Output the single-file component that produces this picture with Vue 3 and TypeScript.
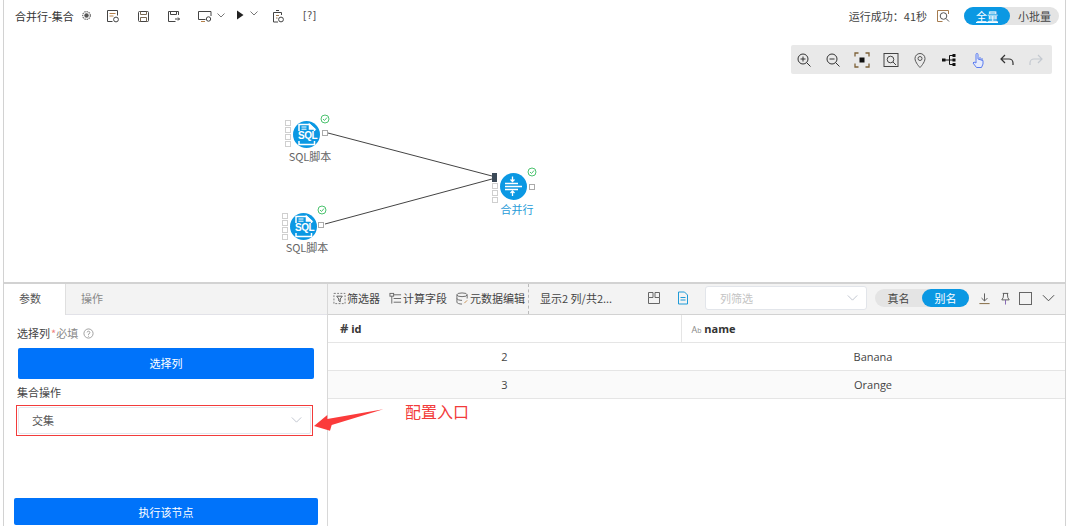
<script setup lang="ts">
interface Row { id: number; name: string }
const rows: Row[] = [
  { id: 2, name: 'Banana' },
  { id: 3, name: 'Orange' },
]
interface CanvasNode { key: string; x: number; y: number; label: string }
const nodes: CanvasNode[] = [
  { key: 'a', x: 280, y: 113, label: 'SQL脚本' },
  { key: 'b', x: 277, y: 206, label: 'SQL脚本' },
]
</script>

<template>
  <div class="page">
    <section class="designer">
      <header class="topbar">
        <span class="title">合并行-集合</span>
        <svg class="ic tb-first" viewBox="0 0 12 12"><circle cx="6" cy="6" r="2.4" fill="#555"/><circle cx="6" cy="6" r="4.2" fill="none" stroke="#777" stroke-width="1.4" stroke-dasharray="1.6 .8"/></svg>
        <svg class="ic tb-doc" viewBox="0 0 14 14" fill="none" stroke="#444"><path d="M1.500 1.500h10v5M1.500 1.500v11h5"/><path d="M3.500 4.500h6M3.500 7h4" stroke="#b5814a"/><circle cx="10" cy="10.500" r="2.400"/></svg>
        <svg class="ic tb" viewBox="0 0 14 14" fill="none" stroke="#444"><rect x="2.500" y="2.500" width="10" height="10" rx="1"/><path d="M4.500 2.500v3h6v-3M4.500 12.500v-4h6v4" stroke="#7b6a55"/></svg>
        <svg class="ic tb" viewBox="0 0 14 14" fill="none" stroke="#444"><path d="M12.500 6V2.500h-10v10h7"/><path d="M4.500 2.500v3h6v-3"/><path d="M9 10h4.500M12 8.500l1.500 1.500-1.500 1.500"/></svg>
        <span class="drop tb-wide">
          <svg class="ic" viewBox="0 0 14 14" fill="none" stroke="#444"><path d="M13 7V2.500H.5v8h7"/><path d="M3 12.500h4" stroke="#b5814a"/><circle cx="10.500" cy="10" r="2.200"/></svg>
          <svg class="chev" viewBox="0 0 8 5" fill="none" stroke="#777"><path d="M.5.500 4 4 7.500.500"/></svg>
        </span>
        <span class="drop play">
          <svg class="ic" viewBox="0 0 14 14"><path d="M4 2.500l6.500 4.500L4 11.500z" fill="#222"/></svg>
          <svg class="chev up" viewBox="0 0 8 5" fill="none" stroke="#777"><path d="M.5.500 4 4 7.500.500"/></svg>
        </span>
        <svg class="ic tb-hist" viewBox="0 0 14 14" fill="none" stroke="#444"><path d="M5 1.500h3M2.500 3.500h8v2.500M2.500 3.500v9.500h4.500"/><path d="M5 6.500h3M5 9h1.500" stroke="#a07a50"/><circle cx="10" cy="10.500" r="2.400"/></svg>
        <span class="help-code">[?]</span>
        <span class="status">运行成功：41秒</span>
        <svg class="ic log" viewBox="0 0 14 14" fill="none" stroke="#555"><path d="M12.500 5V1.500h-11v11h5" stroke="#a57b4e"/><circle cx="7.500" cy="7" r="3.300"/><path d="M10 9.500l3 3"/></svg>
        <div class="mode">
          <span class="mode-on">全量</span>
          <span class="mode-off">小批量</span>
        </div>
      </header>

      <div class="zoombar">
        <svg class="zi" viewBox="0 0 16 16" fill="none" stroke="#333"><circle cx="7" cy="7" r="5"/><path d="M10.500 10.500l4 4M4.500 7h5M7 4.500v5"/></svg>
        <svg class="zi" viewBox="0 0 16 16" fill="none" stroke="#333"><circle cx="7" cy="7" r="5"/><path d="M10.500 10.500l4 4M4.500 7h5"/></svg>
        <svg class="zi" viewBox="0 0 16 16" fill="none" stroke="#7d6238" stroke-width="1.300"><path d="M1 4.500V1h3.500M11.500 1H15v3.500M15 11.500V15h-3.500M4.500 15H1v-3.500"/><rect x="5.500" y="5.500" width="5" height="5" fill="#111" stroke="none"/></svg>
        <svg class="zi" viewBox="0 0 16 16" fill="none" stroke="#444"><rect x="1" y="1.500" width="14" height="13"/><circle cx="7.500" cy="7.500" r="3.300"/><path d="M10 10l3 3"/></svg>
        <svg class="zi" viewBox="0 0 16 16" fill="none" stroke="#555"><path d="M8 15.500S3 10.500 3 6.500a5 5 0 0110 0c0 4-5 9-5 9z"/><circle cx="8" cy="6.500" r="2"/></svg>
        <svg class="zi" viewBox="0 0 16 16" fill="none" stroke="#111"><path d="M4 8h8M8.500 3.500v9M8.500 3.500H12M8.500 12.500H12"/><g fill="#111" stroke="none"><rect x="1" y="6.500" width="3.500" height="3"/><rect x="11.500" y="2" width="3" height="3"/><rect x="11.500" y="6.500" width="3" height="3"/><rect x="11.500" y="11" width="3" height="3"/></g></svg>
        <svg class="zi" viewBox="0 0 16 16" fill="none" stroke="#5b7cf0"><path d="M6 8.500V2.500a1 1 0 012 0V7l5 1.500V12l-1.500 3.500h-5L3 11l1-1 2 1z" fill="#e6ebfb"/><path d="M10 5v2.500M12 6v2.500"/></svg>
        <svg class="zi" viewBox="0 0 16 16" fill="none" stroke="#333" stroke-width="1.200"><path d="M6 3L2 7l4 4M2 7h8a4 4 0 014 4v2"/></svg>
        <svg class="zi" viewBox="0 0 16 16" fill="none" stroke="#c4c9d0" stroke-width="1.200"><path d="M10 3l4 4-4 4M14 7H6a4 4 0 00-4 4v2"/></svg>
      </div>

      <svg class="links" width="1068" height="282" viewBox="0 0 1068 282" fill="none" stroke="#444">
        <path d="M328 133L492 176"/>
        <path d="M325 224L492 179"/>
      </svg>

      <div v-for="n in nodes" :key="n.key" class="node" :class="'n-' + n.key" :style="{ left: n.x + 'px', top: n.y + 'px' }">
        <i class="port" style="left:1px;top:7px"></i>
        <i class="port" style="left:1px;top:14px"></i>
        <i class="port" style="left:1px;top:21px"></i>
        <i class="port" style="left:1px;top:28px"></i>
        <i class="port big"></i>
        <svg class="okmark" viewBox="0 0 10 10" fill="none" stroke="#4cc36f"><circle cx="5" cy="5" r="4"/><path d="M3 5l1.500 1.500L7 3.500"/></svg>
        <span class="disc">
          <svg viewBox="0 0 27 27" width="27" height="27" fill="none" stroke="#fff" stroke-width="1.500"><path d="M6 10V3.500h10.500L21.500 8v2M6 20v3.500h15.500V20"/><path d="M16.500 3.500V8h5z" fill="#fff"/><path d="M8.500 6h5M8.500 8.200h5" stroke-width="1"/></svg>
          <b class="sql-t">SQL</b>
        </span>
        <span class="node-label">{{ n.label }}</span>
      </div>

      <div class="node merge">
        <i class="inport"></i>
        <i class="port" style="left:0;top:17px"></i>
        <i class="port" style="left:0;top:24px"></i>
        <i class="port" style="left:0;top:31px"></i>
        <i class="port big"></i>
        <svg class="okmark" viewBox="0 0 10 10" fill="none" stroke="#4cc36f"><circle cx="5" cy="5" r="4"/><path d="M3 5l1.500 1.500L7 3.500"/></svg>
        <span class="disc">
          <svg viewBox="0 0 27 27" width="27" height="27" fill="none" stroke="#fff" stroke-width="1.300"><path d="M5 10.500h13M5 13.500h17M5 16.500h13"/><path d="M12.500 3.500v4.500M10.500 6.500l2 2 2-2M12.500 23v-4.500M10.500 20l2-2 2 2"/></svg>
        </span>
        <span class="node-label active">合并行</span>
      </div>
    </section>

    <section class="bottom">
      <aside class="side">
        <div class="tabs">
          <span class="tab active">参数</span>
          <span class="tab">操作</span>
        </div>
        <div class="form">
          <div class="lbl first">
            选择列 <em class="star">*</em><span class="req">必填</span>
            <svg class="q" viewBox="0 0 12 12" fill="none" stroke="#999"><circle cx="6" cy="6" r="5"/><path d="M4.500 4.800A1.500 1.500 0 116 6.500v1M6 8.500v1"/></svg>
          </div>
          <button class="primary pick" type="button">选择列</button>
          <div class="lbl second">集合操作</div>
          <div class="select-outline">
            <div class="select">
              <span>交集</span>
              <svg class="sel-chev" viewBox="0 0 12 7" fill="none" stroke="#b8bec8"><path d="M.5.500 6 6l5.500-5.500"/></svg>
            </div>
          </div>
        </div>
        <button class="primary run" type="button">执行该节点</button>
      </aside>

      <div class="data">
        <div class="datatools">
          <span class="tool">
            <svg class="ti" viewBox="0 0 14 14" fill="none" stroke="#777"><rect x="1" y="1.500" width="12" height="11" stroke-dasharray="2 1.500"/><path d="M4 4.500h6L7.800 7.500V10.500L6.200 9.500v-2z" stroke="#555"/></svg>筛选器</span>
          <span class="tool">
            <svg class="ti" viewBox="0 0 14 14" fill="none" stroke="#666"><rect x="1" y="1.500" width="4" height="3"/><path d="M5 3h8M5 7h8M5 11h8M3 4.500v8"/></svg>计算字段</span>
          <span class="tool">
            <svg class="ti" viewBox="0 0 14 14" fill="none" stroke="#666"><ellipse cx="6.500" cy="3" rx="5.500" ry="2"/><path d="M1 3v8c0 1.100 2.500 2 5.500 2M12 3v4M1 7c0 1.100 2.500 2 5.500 2"/><path d="M9 12l3-3" stroke="#c58a4a"/></svg>元数据编辑</span>
          <span class="vdash"></span>
          <span class="shown">显示2 列/共2...</span>
          <svg class="ti2 layout" viewBox="0 0 14 14" fill="none" stroke="#666"><path d="M1.500 1.500h4.500v5h-4.500zM8 1.500h4.500v5H8zM1.500 6.500v6h11v-6"/></svg>
          <svg class="ti2 doc" viewBox="0 0 14 14" fill="none" stroke="#1f9bd8"><path d="M2.500 1h6l3 3v9h-9z"/><path d="M4.500 6.500h5M4.500 9h5"/></svg>
          <div class="colfilter">
            <span>列筛选</span>
            <svg class="sel-chev" viewBox="0 0 12 7" fill="none" stroke="#b8bec8"><path d="M.5.500 6 6l5.500-5.500"/></svg>
          </div>
          <div class="namesw">
            <span class="ns-off">真名</span>
            <span class="ns-on">别名</span>
          </div>
          <svg class="ti3 dl" viewBox="0 0 14 14" fill="none" stroke="#555"><path d="M7 1.500v8M3.800 6.500 7 9.700l3.200-3.200"/><path d="M1.500 12.500h11" stroke="#7d6238"/></svg>
          <svg class="ti3 pin" viewBox="0 0 14 14" fill="none" stroke="#555"><path d="M4 1.500h6M5 1.500 4.500 6 3 8.500h8L9.500 6 9 1.500"/><path d="M7 8.500v5" stroke="#8060b0"/></svg>
          <span class="square"></span>
          <svg class="ti3 collapse" viewBox="0 0 14 8" fill="none" stroke="#444"><path d="M1 1l6 6 6-6"/></svg>
        </div>
        <table class="grid">
          <colgroup><col class="c1" /><col /></colgroup>
          <thead>
            <tr>
              <th class="th-id"><span class="hash">#</span> id</th>
              <th class="th-name"><span class="ab">A<small>b</small></span> name</th>
            </tr>
          </thead>
          <tbody>
            <tr v-for="(r, i) in rows" :key="r.id" :class="{ alt: i === 1 }">
              <td>{{ r.id }}</td>
              <td>{{ r.name }}</td>
            </tr>
          </tbody>
        </table>
      </div>
    </section>

    <svg class="callout" width="80" height="30" viewBox="0 0 80 30"><path d="M1 21 14.300 10v4L70.300 4.300 18.700 20 17 25.700z" fill="#fb3b3b" /></svg>
    <span class="callout-text">配置入口</span>
  </div>
</template>

<style>
html, body { margin: 0; background: #fff; }
</style>

<style scoped>
.page {
  position: relative;
  width: 1068px;
  height: 526px;
  overflow: hidden;
  box-sizing: border-box;
  padding: 0 2px 0 3px;
  background: #fff;
  font-family: "Noto Sans CJK SC", "Open Sans", sans-serif;
  font-size: 11px;
  color: #333;
}
.designer {
  position: relative;
  height: 282px;
  box-sizing: border-box;
  border-left: 1px solid #d2d2d2;
  border-right: 1px solid #d2d2d2;
}
.topbar {
  display: flex;
  align-items: center;
  height: 31px;
  padding: 0 6px 0 11px;
}
.title { font-size: 11px; color: #333; white-space: nowrap; width: 61px; }
.ic { width: 14px; height: 14px; flex: none; }
.tb-first { width: 11px; height: 11px; margin-left: 5px; }
.tb-doc { margin-left: 14px; }
.tb { margin-left: 16px; }
.drop { display: flex; align-items: center; flex: none; }
.tb-wide { margin-left: 18px; }
.chev { width: 8px; height: 5px; margin-left: 5px; }
.play { margin-left: 8px; }
.play .ic { margin-top: -2px; }
.chev.up { margin-top: -4px; margin-left: 3px; }
.tb-hist { margin-left: 13px; }
.help-code { margin-left: 18px; font: 10px "DejaVu Sans", sans-serif; color: #555; }
.status { margin-left: auto; font-size: 11px; color: #444; }
.log { margin-left: 9px; }
.mode {
  display: flex;
  align-items: center;
  width: 95px;
  height: 18px;
  margin-left: 14px;
  border-radius: 9px;
  background: #e4e4e4;
}
.mode-on {
  width: 46px;
  height: 18px;
  line-height: 18px;
  border-radius: 9px;
  background: #0b98e3;
  color: #fff;
  text-align: center;
  text-decoration: underline;
}
.mode-off { flex: 1; text-align: center; color: #444; }

.zoombar {
  position: absolute;
  left: 787px;
  top: 45px;
  width: 261px;
  height: 29px;
  box-sizing: border-box;
  padding: 0 0 0 5px;
  display: flex;
  align-items: center;
  gap: 13px;
  border-radius: 2px;
  background: #e9e9e9;
}
.zi { width: 16px; height: 16px; flex: none; }

.links { position: absolute; left: -4px; top: 0; pointer-events: none; }
.node { position: absolute; width: 52px; height: 56px; }
.port {
  position: absolute;
  width: 4px;
  height: 4px;
  border: 1px solid #cfcfcf;
  background: #fff;
}
.port.big { left: 38px; top: 17px; border-color: #aaa; }
.okmark { position: absolute; left: 36px; top: 1px; width: 10px; height: 10px; }
.disc {
  position: absolute;
  left: 9px;
  top: 8px;
  width: 27px;
  height: 27px;
  border-radius: 50%;
  background: #0b98e3;
}
.disc svg { display: block; }
.sql-t {
  position: absolute;
  left: 5px;
  top: 10px;
  width: 17px;
  text-align: center;
  letter-spacing: -0.5px;
  font: bold 10px/10px "Liberation Sans", sans-serif;
  color: #fff;
}
.node-label {
  position: absolute;
  left: 0;
  top: 35px;
  width: 52px;
  text-align: center;
  font-size: 11px;
  line-height: 16px;
  color: #666;
  white-space: nowrap;
}
.n-b .disc { top: 7px; }
.n-b .port.big { left: 37px; top: 16px; }
.n-b .okmark { top: -1px; }
.n-b .node-label { top: 33px; }
.merge { left: 488px; top: 166px; }
.merge .disc { left: 8px; top: 7px; }
.merge .okmark { left: 35px; top: 1px; }
.merge .port.big { left: 37px; top: 18px; }
.merge .node-label { left: -1px; top: 35px; color: #1f9bd8; }
.inport {
  position: absolute;
  left: 0;
  top: 7px;
  width: 5px;
  height: 9px;
  background: #3c4a58;
}

.bottom {
  display: flex;
  height: 244px;
  box-sizing: border-box;
  border-top: 2px solid #d2d2d2;
  border-left: 1px solid #d2d2d2;
  border-right: 1px solid #d2d2d2;
}
.side {
  position: relative;
  flex: none;
  width: 324px;
  box-sizing: border-box;
  border-right: 1px solid #d8d8d8;
}
.tabs {
  display: flex;
  height: 30px;
  background: #f3f3f3;
  border-bottom: 1px solid #e2e2e8;
}
.tab {
  padding-left: 15px;
  line-height: 29px;
  font-size: 11px;
  color: #888;
  box-sizing: border-box;
}
.tab.active {
  width: 62px;
  height: 31px;
  background: #fff;
  color: #555;
  border-right: 1px solid #dfdfdf;
}
.form { padding: 0 13px 0 14px; }
.lbl { font-size: 11px; line-height: 16px; color: #444; margin-left: -1px; }
.lbl.first { margin-top: 10px; display: flex; align-items: center; }
.star { color: #f08080; font-style: normal; margin-left: 1px; }
.req { color: #888; }
.q { width: 11px; height: 11px; margin-left: 5px; }
.primary {
  display: block;
  border: 0;
  background: #0073fa;
  color: #fff;
  font-family: inherit;
  font-size: 11px;
  border-radius: 2px;
}
.pick { width: 296px; height: 31px; margin-top: 7px; padding: 0 0 2px; }
.lbl.second { margin-top: 5px; }
.select-outline {
  margin: 5px 0 0 -2px;
  width: 297px;
  height: 31px;
  box-sizing: border-box;
  border: 1px solid #f23b3b;
  padding: 1px;
}
.select {
  height: 100%;
  box-sizing: border-box;
  padding: 0 8px 2px 13px;
  border-radius: 2px;
  border: 1px solid #e4e7ee;
  display: flex;
  align-items: center;
  justify-content: space-between;
  color: #555;
}
.sel-chev { width: 11px; height: 6px; flex: none; }
.run {
  position: absolute;
  left: 10px;
  bottom: 1px;
  width: 304px;
  height: 27px;
  padding: 0;
}
.data { flex: 1; min-width: 0; }
.datatools {
  display: flex;
  align-items: center;
  height: 28px;
  padding: 0 0 2px 5px;
  background: #f3f3f3;
  border-bottom: 1px solid #d2d2d2;
}
.tool { display: flex; align-items: center; color: #444; margin-right: 9px; white-space: nowrap; }
.ti { width: 13px; height: 13px; margin-right: 1px; flex: none; }
.vdash { align-self: stretch; width: 0; border-left: 1px dashed #bbb; margin: 0 0 -2px -6px; }
.shown { margin-left: 11px; width: 96px; color: #444; white-space: nowrap; }
.ti2 { width: 14px; height: 14px; flex: none; }
.layout { margin-left: 11px; }
.doc { margin-left: 15px; }
.colfilter {
  margin-left: 15px;
  width: 162px;
  height: 24px;
  box-sizing: border-box;
  padding: 0 8px 0 14px;
  border: 1px solid #e2e5ea;
  border-radius: 3px;
  background: #fff;
  display: flex;
  align-items: center;
  justify-content: space-between;
  color: #c4c4c4;
}
.namesw {
  margin-left: 8px;
  width: 94px;
  height: 18px;
  display: flex;
  align-items: center;
  border-radius: 9px;
  background: #e4e4e4;
}
.ns-off { width: 47px; text-align: center; color: #444; }
.ns-on {
  width: 47px;
  line-height: 18px;
  border-radius: 9px;
  background: #0b98e3;
  color: #fff;
  text-align: center;
}
.ti3 { width: 13px; height: 13px; flex: none; }
.dl { margin-left: 9px; }
.pin { margin-left: 8px; }
.square { width: 11px; height: 11px; border: 1px solid #666; margin-left: 7px; flex: none; }
.collapse { margin-left: 10px; height: 8px; }
.grid {
  width: 100%;
  table-layout: fixed;
  border-collapse: collapse;
  font-size: 11px;
  color: #444;
}
.c1 { width: 353px; }
.grid th {
  height: 27px;
  padding: 0 0 0 12px;
  text-align: left;
  font: bold 11px "Open Sans", sans-serif;
  color: #333;
  border-bottom: 1px solid #e5e5e5;
  box-sizing: border-box;
}
.th-name { border-left: 1px solid #e5e5e5; padding-left: 10px !important; }
.hash { font-size: 13px; color: #444; }
.ab { color: #888; font-weight: 400; font-size: 9px; }
.ab small { font-size: 7px; }
.grid td {
  height: 28px;
  padding: 0;
  text-align: center;
  border-bottom: 1px solid #e5e5e5;
  box-sizing: border-box;
  font-family: "Open Sans", sans-serif;
}
.grid tr.alt td { background: #fafafa; }
.callout { position: absolute; left: 313px; top: 405px; }
.callout-text { position: absolute; left: 405px; top: 400px; font-size: 16px; line-height: 22px; color: #f23b3b; }
</style>
